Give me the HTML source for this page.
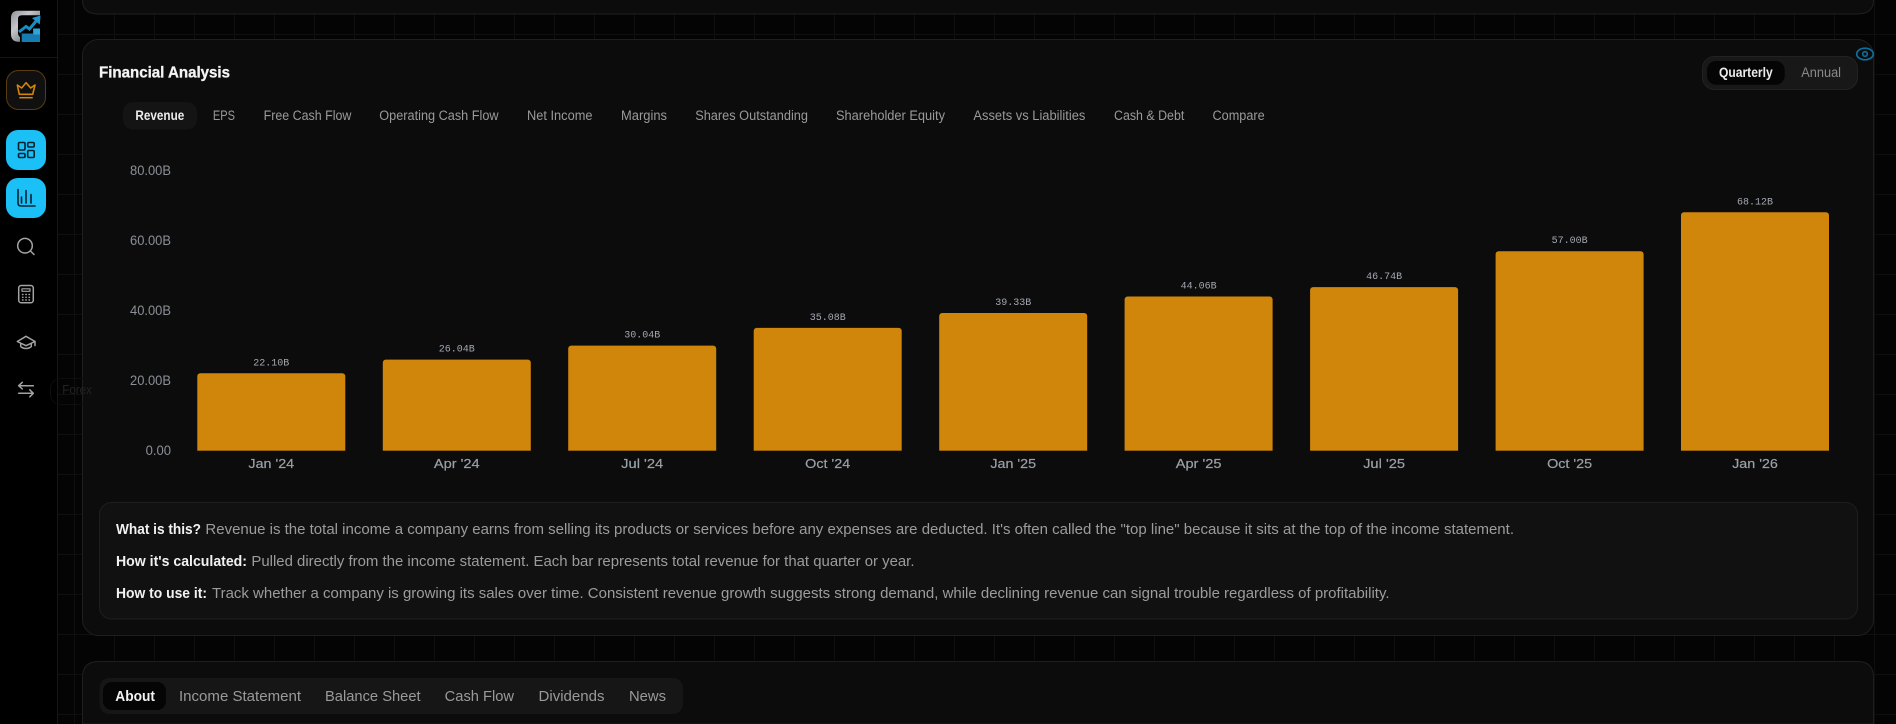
<!DOCTYPE html>
<html lang="en">
<head>
<meta charset="utf-8">
<title>Financial Analysis</title>
<style>
html,body{margin:0;padding:0;width:1896px;height:724px;overflow:hidden;background:#040404}
svg{display:block}
text{font-family:"Liberation Sans",sans-serif}
.tab{font-size:13.5px;fill:#9a9a9a}
.yl{font-size:13.5px;fill:#8b8f96;text-anchor:end}
.xl{font-size:13px;fill:#9aa0a8;text-anchor:middle;stroke:#9aa0a8;stroke-width:.2}
.vl{font-family:"Liberation Mono",monospace;font-size:10px;fill:#a3a9b1;text-anchor:middle}
.inf{font-size:14.5px;fill:#9c9c9c}
.b{font-size:14.5px;font-weight:700;fill:#f2f2f2}
.lt{font-size:14.5px;fill:#9a9a9a}
.ic{fill:none;stroke:#a3a3a3;stroke-width:1.5;stroke-linecap:round;stroke-linejoin:round}
.id{fill:none;stroke:#06222e;stroke-width:1.6;stroke-linecap:round;stroke-linejoin:round}
</style>
</head>
<body>
<svg width="1896" height="724" viewBox="0 0 1896 724" xmlns="http://www.w3.org/2000/svg">
<defs>
<pattern id="g" x="34" y="34" width="40" height="40" patternUnits="userSpaceOnUse">
<path d="M0.5 0V40M0 0.5H40" stroke="#0f0f0f" stroke-width="1" fill="none"/>
</pattern>
<linearGradient id="lg" x1="0" y1="0" x2="1" y2="1">
<stop offset="0" stop-color="#8f9195"/><stop offset=".35" stop-color="#c4c6c9"/><stop offset=".7" stop-color="#808285"/><stop offset="1" stop-color="#b4b6b8"/>
</linearGradient>
</defs>
<rect width="1896" height="724" fill="#040404"/>
<rect width="1896" height="724" fill="url(#g)"/>

<!-- cards -->
<path d="M82.500 0V-2Q82.500 14 98.500 14H1857.500Q1873.500 14 1873.500 -2V0Z" fill="#0c0c0c"/>
<path d="M82.500 0Q82.500 14 98.500 14H1857.500Q1873.500 14 1873.500 0" fill="#0c0c0c" stroke="#1f1f1f"/>
<rect x="82.500" y="39.500" width="1791" height="596" rx="16" fill="#0c0c0c" stroke="#1f1f1f"/>
<path d="M82.500 724V677.500Q82.500 661.500 98.500 661.500H1857.500Q1873.500 661.500 1873.500 677.500V724Z" fill="#0c0c0c" stroke="#1f1f1f"/>

<!-- sidebar -->
<rect x="0" y="0" width="57" height="724" fill="#000"/>
<rect x="57" y="0" width="1" height="724" fill="#161616"/>
<rect x="0" y="57" width="57" height="1" fill="#161616"/>

<!-- logo -->
<path d="M40 10.700H18Q11 10.700 11 18V34Q11 41.700 18.500 41.700H20V37Q18 35.500 18 33V19Q18 15.300 22 15.300H40Z" fill="url(#lg)"/>
<path d="M21.700 42V33.500H33V28.500H40V42Z" fill="#157bb0"/>
<rect x="33.500" y="28.500" width="6.500" height="6" fill="#2ba6dc"/>
<path d="M19 32L26 26.500L29.500 29L37 20" fill="none" stroke="#1a8cc4" stroke-width="3"/>
<path d="M32 18L40.500 15.500L39.800 24.500Z" fill="#1f95cf"/>

<!-- crown -->
<rect x="6.500" y="70.500" width="39" height="39" rx="12" fill="#101010" stroke="#5a3d0c"/>
<path d="M17.300 85L21.700 88L26 82.700L30.700 88L35 85L32.700 94.300H19.300Z" fill="none" stroke="#d0860a" stroke-width="1.600" stroke-linejoin="round"/>
<path d="M19.300 97.700H32.700" stroke="#d0860a" stroke-width="1.500"/>

<!-- active buttons -->
<rect x="6" y="130" width="40" height="40" rx="12" fill="#1bc0f6"/>
<rect x="6" y="178" width="40" height="40" rx="12" fill="#1bc0f6"/>
<g class="id">
<rect x="18.500" y="142.500" width="6.500" height="7.500" rx="1.200"/>
<rect x="18.500" y="153.500" width="6.500" height="4" rx="1.200"/>
<rect x="27.700" y="142.500" width="6.500" height="4.500" rx="1.200"/>
<rect x="27.700" y="150.500" width="6.500" height="7" rx="1.200"/>
<path d="M18 189.500V203Q18 206 21 206H35"/>
<path d="M21.500 197V203M26 190.500V203M31 194.500V203"/>
</g>

<!-- inactive icons -->
<g class="ic">
<circle cx="25" cy="245.700" r="7.300"/>
<path d="M30.500 251L34 254.500"/>
<rect x="18.700" y="285.500" width="14.600" height="17.200" rx="2.500"/>
<path d="M22 288.800H30V291.300H22Z" stroke-width="1.200"/>
<path d="M22.500 294.500H23M25.800 294.500H26.300M29 294.500H29.500M22.500 297.300H23M25.800 297.300H26.300M29 297.300H29.500M22.500 300H23M25.800 300H26.300M29 300H29.500" stroke-width="1.400"/>
<path d="M17.300 341.500L26 336.300L35 341.500L26 345.700Z"/>
<path d="M20.700 343.500V346.500Q23 348.500 26 348.500T31.300 346.500V343.500"/>
<path d="M35 341.500V345.500"/>
<path d="M18.700 385.700H33.300M22.300 382.300L18.700 385.700L22.300 389"/>
<path d="M18.700 393.300H33.300M29.800 389.800L33.300 393.300L29.800 396.800"/>
</g>

<!-- forex tooltip -->
<rect x="50.500" y="378.500" width="54" height="26" rx="10" fill="none" stroke="#0d0d0d"/>
<text x="62.300" y="394" font-size="13" fill="#232323" textLength="29.500" lengthAdjust="spacingAndGlyphs">Forex</text>

<!-- heading -->
<text x="99" y="77.500" font-size="15.500" font-weight="700" fill="#f4f4f4" stroke="#f4f4f4" stroke-width=".3" textLength="131" lengthAdjust="spacingAndGlyphs">Financial Analysis</text>

<!-- toggle -->
<rect x="1702.500" y="56.500" width="155" height="33" rx="12" fill="#181818" stroke="#222"/>
<rect x="1707" y="61" width="77.700" height="23.700" rx="9" fill="#050505"/>
<text x="1719" y="76.800" font-size="13.500" font-weight="700" fill="#ececec" textLength="53.700" lengthAdjust="spacingAndGlyphs">Quarterly</text>
<text x="1801.300" y="76.800" font-size="13.500" fill="#8a8a8a" textLength="39.700" lengthAdjust="spacingAndGlyphs">Annual</text>
<ellipse cx="1865" cy="54" rx="8.300" ry="5.800" fill="none" stroke="#0e6f9e" stroke-width="1.700"/>
<circle cx="1865" cy="54" r="2.300" fill="none" stroke="#0e6f9e" stroke-width="1.600"/>

<!-- metric tabs -->
<rect x="123" y="102" width="74" height="27.500" rx="10" fill="#141414"/>
<text x="135.400" y="120" font-size="13.500" font-weight="700" fill="#ececec" textLength="48.900" lengthAdjust="spacingAndGlyphs">Revenue</text>
<text class="tab" x="212.900" y="120" textLength="22.100" lengthAdjust="spacingAndGlyphs">EPS</text>
<text class="tab" x="263.600" y="120" textLength="87.800" lengthAdjust="spacingAndGlyphs">Free Cash Flow</text>
<text class="tab" x="379.300" y="120" textLength="119.300" lengthAdjust="spacingAndGlyphs">Operating Cash Flow</text>
<text class="tab" x="527" y="120" textLength="65.500" lengthAdjust="spacingAndGlyphs">Net Income</text>
<text class="tab" x="621" y="120" textLength="46" lengthAdjust="spacingAndGlyphs">Margins</text>
<text class="tab" x="695.200" y="120" textLength="112.800" lengthAdjust="spacingAndGlyphs">Shares Outstanding</text>
<text class="tab" x="836" y="120" textLength="109" lengthAdjust="spacingAndGlyphs">Shareholder Equity</text>
<text class="tab" x="973.400" y="120" textLength="112" lengthAdjust="spacingAndGlyphs">Assets vs Liabilities</text>
<text class="tab" x="1114" y="120" textLength="70.300" lengthAdjust="spacingAndGlyphs">Cash &amp; Debt</text>
<text class="tab" x="1212.500" y="120" textLength="52.200" lengthAdjust="spacingAndGlyphs">Compare</text>

<!-- y axis -->
<text class="yl" x="171" y="175" textLength="41" lengthAdjust="spacingAndGlyphs">80.00B</text>
<text class="yl" x="171" y="245" textLength="41" lengthAdjust="spacingAndGlyphs">60.00B</text>
<text class="yl" x="171" y="315" textLength="41" lengthAdjust="spacingAndGlyphs">40.00B</text>
<text class="yl" x="171" y="385" textLength="41" lengthAdjust="spacingAndGlyphs">20.00B</text>
<text class="yl" x="171" y="455" textLength="25.400" lengthAdjust="spacingAndGlyphs">0.00</text>

<!-- bars -->
<g fill="#d0860a">
<rect x="197.300" y="373.300" width="148" height="82" rx="3"/>
<rect x="382.800" y="359.600" width="148" height="96" rx="3"/>
<rect x="568.200" y="345.600" width="148" height="110" rx="3"/>
<rect x="753.700" y="327.900" width="148" height="128" rx="3"/>
<rect x="939.200" y="313" width="148" height="142" rx="3"/>
<rect x="1124.600" y="296.500" width="148" height="159" rx="3"/>
<rect x="1310.100" y="287.100" width="148" height="168" rx="3"/>
<rect x="1495.600" y="251.200" width="148" height="204" rx="3"/>
<rect x="1681" y="212.300" width="148" height="243" rx="3"/>
</g>
<rect x="190" y="450.700" width="1650" height="8" fill="#0c0c0c"/>

<!-- value labels -->
<text class="vl" x="271.300" y="365.500">22.10B</text>
<text class="vl" x="456.800" y="351.500">26.04B</text>
<text class="vl" x="642.200" y="337.500">30.04B</text>
<text class="vl" x="827.700" y="320">35.08B</text>
<text class="vl" x="1013.200" y="305">39.33B</text>
<text class="vl" x="1198.600" y="288.500">44.06B</text>
<text class="vl" x="1384.100" y="279">46.74B</text>
<text class="vl" x="1569.600" y="243">57.00B</text>
<text class="vl" x="1755" y="204.500">68.12B</text>

<!-- x axis -->
<text class="xl" x="271.300" y="468" textLength="45.700" lengthAdjust="spacingAndGlyphs">Jan '24</text>
<text class="xl" x="456.800" y="468" textLength="45.700" lengthAdjust="spacingAndGlyphs">Apr '24</text>
<text class="xl" x="642.200" y="468" textLength="42" lengthAdjust="spacingAndGlyphs">Jul '24</text>
<text class="xl" x="827.700" y="468" textLength="45" lengthAdjust="spacingAndGlyphs">Oct '24</text>
<text class="xl" x="1013.200" y="468" textLength="45.700" lengthAdjust="spacingAndGlyphs">Jan '25</text>
<text class="xl" x="1198.600" y="468" textLength="45.700" lengthAdjust="spacingAndGlyphs">Apr '25</text>
<text class="xl" x="1384.100" y="468" textLength="42" lengthAdjust="spacingAndGlyphs">Jul '25</text>
<text class="xl" x="1569.600" y="468" textLength="45" lengthAdjust="spacingAndGlyphs">Oct '25</text>
<text class="xl" x="1755" y="468" textLength="45.700" lengthAdjust="spacingAndGlyphs">Jan '26</text>

<!-- info box -->
<rect x="99.500" y="502.500" width="1758" height="116.500" rx="12" fill="#111" stroke="#1e1e1e"/>
<text class="b" x="116" y="534" textLength="85" lengthAdjust="spacingAndGlyphs">What is this?</text>
<text class="inf" x="205.400" y="534" textLength="1308.600" lengthAdjust="spacingAndGlyphs">Revenue is the total income a company earns from selling its products or services before any expenses are deducted. It's often called the "top line" because it sits at the top of the income statement.</text>
<text class="b" x="116" y="566" textLength="131" lengthAdjust="spacingAndGlyphs">How it's calculated:</text>
<text class="inf" x="251.400" y="566" textLength="663.100" lengthAdjust="spacingAndGlyphs">Pulled directly from the income statement. Each bar represents total revenue for that quarter or year.</text>
<text class="b" x="116" y="598" textLength="91" lengthAdjust="spacingAndGlyphs">How to use it:</text>
<text class="inf" x="212" y="598" textLength="1177.500" lengthAdjust="spacingAndGlyphs">Track whether a company is growing its sales over time. Consistent revenue growth suggests strong demand, while declining revenue can signal trouble regardless of profitability.</text>

<!-- lower tabs -->
<rect x="99.500" y="678" width="583.500" height="36" rx="10" fill="#161616"/>
<rect x="103" y="682" width="63" height="28" rx="9" fill="#050505"/>
<text x="115.300" y="701" font-size="14.500" font-weight="700" fill="#f2f2f2" textLength="39.700" lengthAdjust="spacingAndGlyphs">About</text>
<text class="lt" x="179" y="701" textLength="122" lengthAdjust="spacingAndGlyphs">Income Statement</text>
<text class="lt" x="325" y="701" textLength="95.600" lengthAdjust="spacingAndGlyphs">Balance Sheet</text>
<text class="lt" x="444.700" y="701" textLength="69.300" lengthAdjust="spacingAndGlyphs">Cash Flow</text>
<text class="lt" x="538.500" y="701" textLength="66" lengthAdjust="spacingAndGlyphs">Dividends</text>
<text class="lt" x="629" y="701" textLength="37" lengthAdjust="spacingAndGlyphs">News</text>
</svg>
</body>
</html>
